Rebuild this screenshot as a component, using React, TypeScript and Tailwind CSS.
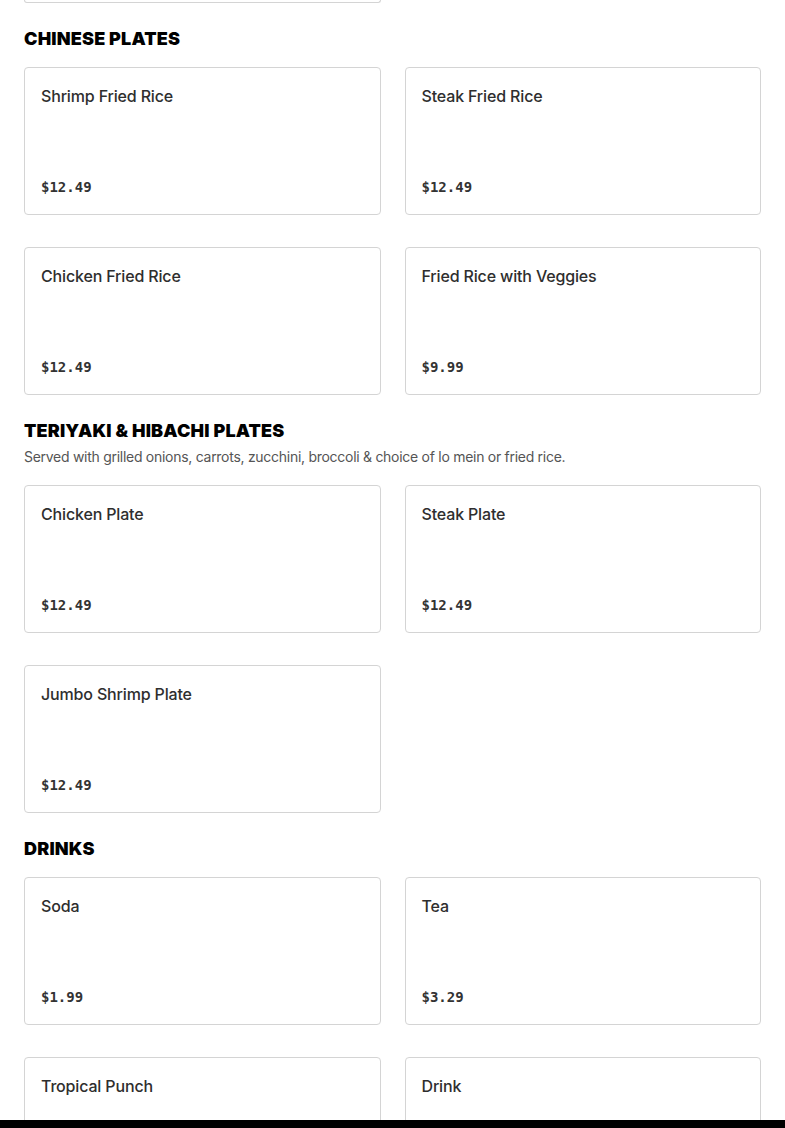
type Item = { name: string; price: string }
type Section = { title: string; note?: string; items: Item[] }

const sections: Section[] = [
  {
    title: 'CHINESE PLATES',
    items: [
      { name: 'Shrimp Fried Rice', price: '$12.49' },
      { name: 'Steak Fried Rice', price: '$12.49' },
      { name: 'Chicken Fried Rice', price: '$12.49' },
      { name: 'Fried Rice with Veggies', price: '$9.99' },
    ],
  },
  {
    title: 'TERIYAKI & HIBACHI PLATES',
    note: 'Served with grilled onions, carrots, zucchini, broccoli & choice of lo mein or fried rice.',
    items: [
      { name: 'Chicken Plate', price: '$12.49' },
      { name: 'Steak Plate', price: '$12.49' },
      { name: 'Jumbo Shrimp Plate', price: '$12.49' },
    ],
  },
  {
    title: 'DRINKS',
    items: [
      { name: 'Soda', price: '$1.99' },
      { name: 'Tea', price: '$3.29' },
      { name: 'Tropical Punch', price: '$2.49' },
      { name: 'Drink', price: '$1.99' },
    ],
  },
]

function MenuCard({ item }: { item: Item }) {
  return (
    <div className="flex h-[148px] flex-col justify-between rounded-[4px] border border-[#d4d4d4] bg-white px-4 pt-4 pb-[17px]">
      <h3 className="text-[16px] font-medium leading-6 tracking-[-0.01em] text-[#2e2e2e]">{item.name}</h3>
      <p className="font-['DejaVu_Sans_Mono',monospace] text-[14px] font-bold leading-5 text-[#333]">{item.price}</p>
    </div>
  )
}

export default function App() {
  return (
    <div className="relative h-[1128px] overflow-hidden bg-white font-['Inter',sans-serif]">
      <div className="px-6">
        <div className="grid grid-cols-2 gap-6">
          <div className="h-[3px] rounded-b-[4px] border-x border-b border-[#d4d4d4]" />
        </div>

        {sections.map((section) => (
          <section key={section.title} className="pt-[22px]">
            <h2 className="text-[18px] font-black leading-7 tracking-[0.01em] text-black">{section.title}</h2>
            {section.note ? (
              <p className="mt-[2px] text-[14px] leading-5 tracking-[-0.02em] text-[#555]">{section.note}</p>
            ) : null}
            <div className={`grid grid-cols-2 gap-x-6 gap-y-8 ${section.note ? 'mt-[18px]' : 'mt-[14px]'}`}>
              {section.items.map((item) => (
                <MenuCard key={item.name} item={item} />
              ))}
            </div>
          </section>
        ))}
      </div>

      <div className="absolute inset-x-0 bottom-0 h-2 bg-black" />
    </div>
  )
}
